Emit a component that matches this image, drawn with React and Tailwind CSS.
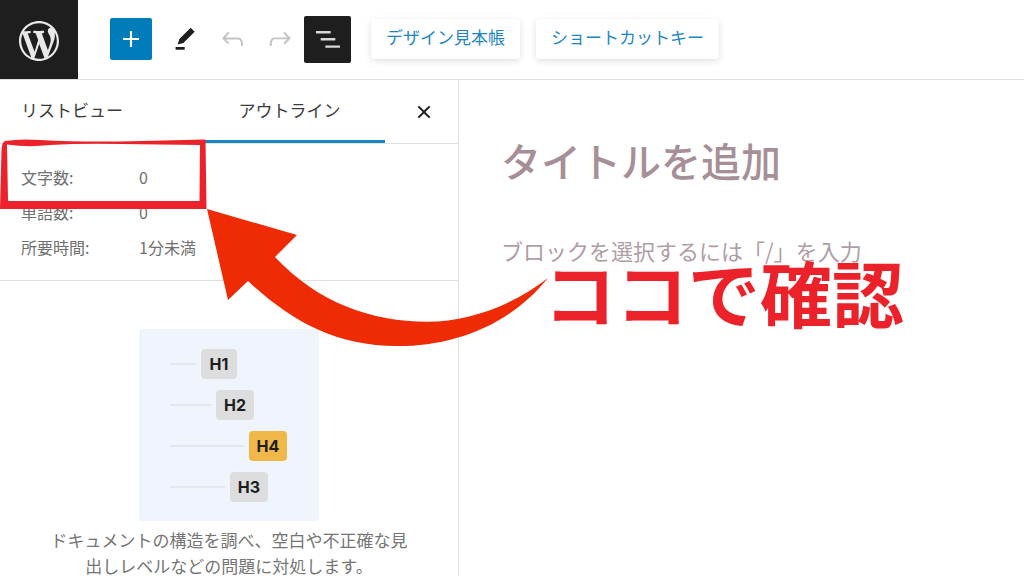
import { useState } from 'react';

const icons = {
  plus: 'M18 11.2h-5.2V6h-1.6v5.2H6v1.6h5.2V18h1.6v-5.2H18z',
  edit: 'm20 6.500-3-3-8.5 8.5-1.200 4.200 4.200-1.200L20 6.500Zm-7.500 11.500H5.700V20h6.800v-2Z',
  undo: 'M18.800 11.7c-.6-.6-1.4-.9-2.3-.9H7.200l2.9-3.3-1.1-1-4.5 5L9 16l1-1-2.7-2.7h9.200c.5 0 .9.2 1.3.5 1 1 1 3.100 1 4.200v.3h1.5v-.2c0-1.5 0-4-1.5-5.400z',
  redo: 'M15.6 6.5l-1.1 1 2.9 3.3H8c-.9 0-1.7.3-2.3.9-1.4 1.5-1.4 3.900-1.4 5.300v.2h1.5v-.3c0-1.1 0-3.200 1-4.200.3-.3.7-.5 1.3-.5h9.2L14.5 15l1.1 1.1 4.6-4.6-4.6-5z',
  list: 'M3 6h11v1.8H3V6Zm3.5 5.3h11v1.8h-11v-1.8ZM21 16.8H10v1.8h11v-1.8Z',
  close: 'M12 13.06l3.712 3.713 1.061-1.06L13.061 12l3.712-3.712-1.06-1.06L12 10.938 8.288 7.227l-1.061 1.06L10.939 12l-3.712 3.712 1.06 1.061L12 13.061z',
};

const stats = [
  { label: '文字数:', value: '0' },
  { label: '単語数:', value: '0' },
  { label: '所要時間:', value: '1分未満' },
];

const headings = [
  { label: 'H1', line: 'w-[26px]', badge: 'w-9 bg-[#dddddd]' },
  { label: 'H2', line: 'w-[41px]', badge: 'w-[38px] bg-[#dddddd]' },
  { label: 'H4', line: 'w-[74px]', badge: 'w-[38px] bg-[#f0b849]' },
  { label: 'H3', line: 'w-[55px]', badge: 'w-[38px] bg-[#dddddd]' },
];

function Icon({ name }) {
  return (
    <svg viewBox="0 0 24 24" className="w-8 h-8 shrink-0" fill="currentColor" aria-hidden="true">
      <path d={icons[name]} />
    </svg>
  );
}

function WordPressLogo() {
  return (
    <svg viewBox="0 0 20 20" className="w-10 h-10" fill="currentColor" aria-hidden="true">
      <path d="M20 10c0-5.51-4.49-10-10-10C4.48 0 0 4.49 0 10c0 5.52 4.48 10 10 10 5.51 0 10-4.48 10-10zM7.78 15.37L4.37 6.22c.55-.02 1.17-.08 1.17-.08.5-.06.44-1.13-.06-1.11 0 0-1.45.11-2.37.11-.18 0-.37 0-.58-.01C4.12 2.69 6.87 1.11 10 1.11c2.33 0 4.45.87 6.05 2.34-.68-.11-1.65.39-1.65 1.58 0 .74.45 1.36.9 2.1.35.61.55 1.36.55 2.46 0 1.49-1.4 5-1.4 5l-3.03-8.37c.54-.02.82-.17.82-.17.5-.05.44-1.25-.06-1.22 0 0-1.44.12-2.38.12-.87 0-2.33-.12-2.33-.12-.5-.03-.56 1.2-.06 1.22l.92.08 1.26 3.41zM17.41 10c.24-.64.74-1.87.43-4.25.7 1.29 1.05 2.71 1.05 4.25 0 3.29-1.73 6.24-4.4 7.78.97-2.59 1.94-5.2 2.92-7.78zM6.1 18.09C3.12 16.65 1.11 13.53 1.11 10c0-1.3.23-2.48.72-3.59C3.25 10.3 4.67 14.2 6.1 18.09zm4.03-6.63l2.58 6.98c-.86.29-1.76.45-2.71.45-.79 0-1.57-.11-2.29-.33.81-2.38 1.62-4.74 2.42-7.1z" />
    </svg>
  );
}

function Header() {
  const linkButton = 'h-10 px-[15px] pb-1 rounded-sm bg-white text-[17px] text-[#1c86c3] shadow-[0_2px_7px_rgba(0,0,0,0.13)]';
  return (
    <header className="flex items-center border-b border-[#e0e0e0]">
      <a href="#" aria-label="投稿一覧" className="w-[78px] h-[79px] pt-0.5 flex items-center justify-center bg-[#1e1e1e] text-[#e8e8e8]">
        <WordPressLogo />
      </a>
      <div className="flex items-center gap-4 pl-8 pb-px">
        <button aria-label="ブロックを追加" className="w-[42px] h-[42px] flex items-center justify-center rounded-xs bg-[#007cba] text-white"><Icon name="plus" /></button>
        <button aria-label="ツール" className="text-[#1e1e1e]"><Icon name="edit" /></button>
        <button aria-label="元に戻す" className="text-[#c4c4c4]"><Icon name="undo" /></button>
        <button aria-label="やり直す" className="text-[#c4c4c4]"><Icon name="redo" /></button>
        <button aria-label="ドキュメント概観" className="-ml-2 w-[47px] h-[47px] flex items-center justify-center rounded-xs bg-[#1e1e1e] text-[#d8d8d8]"><Icon name="list" /></button>
        <button className={`${linkButton} ml-1`}>デザイン見本帳</button>
        <button className={linkButton}>ショートカットキー</button>
      </div>
    </header>
  );
}

function Sidebar() {
  return (
    <aside className="w-[459px] shrink-0 border-r border-[#e0e0e0]">
      <div className="h-16 flex border-b border-[#e0e0e0] text-[17px] text-[#3c3c3c]">
        <div role="tablist" className="flex">
          <button role="tab" aria-selected="false" className="w-[194px] pl-[21px] pb-1 text-left">リストビュー</button>
          <button role="tab" aria-selected="true" className="w-[191px] border-b-3 border-[#1c86c3]">アウトライン</button>
        </div>
        <button aria-label="閉じる" className="ml-auto mr-[18px] text-[#1e1e1e]"><Icon name="close" /></button>
      </div>

      <dl className="px-[21px] pt-4 pb-[15px] border-b border-[#e0e0e0] text-base leading-[35px] text-[#707070]">
        {stats.map((s) => (
          <div key={s.label} className="flex">
            <dt className="w-[118px]">{s.label}</dt>
            <dd>{s.value}</dd>
          </div>
        ))}
      </dl>

      <div className="pt-12 flex flex-col items-center">
        <div className="w-[180px] h-48 pl-[31px] flex flex-col justify-center gap-[11px] rounded-xs bg-[#f0f5fd]">
          {headings.map((h) => (
            <div key={h.label} className="flex items-center gap-[5px]">
              <span className={`${h.line} h-0.5 bg-[#e4e6ec]`} />
              <span className={`${h.badge} h-[30px] flex items-center justify-center rounded-sm font-['Inter',sans-serif] font-bold text-base text-[#1e1e1e]`}>{h.label}</span>
            </div>
          ))}
        </div>
        <p className="w-[358px] pt-1.5 text-center text-[17px] leading-[26px] text-[#757575]">
          ドキュメントの構造を調べ、空白や不正確な見出しレベルなどの問題に対処します。
        </p>
      </div>
    </aside>
  );
}

function Editor() {
  const [title, setTitle] = useState('');
  const [body, setBody] = useState('');
  return (
    <main className="flex-1 min-w-0 pl-[42px] pt-14">
      <input
        type="text"
        aria-label="タイトルを追加"
        value={title}
        onChange={(e) => setTitle(e.target.value)}
        placeholder="タイトルを追加"
        className="block w-full h-12 text-[40px] font-medium outline-none placeholder-[#a78f98]"
      />
      <input
        type="text"
        aria-label="ブロック"
        value={body}
        onChange={(e) => setBody(e.target.value)}
        placeholder="ブロックを選択するには「/」を入力"
        className="block w-full h-8 mt-[50px] text-[22px] outline-none placeholder-[#b09da5]"
      />
    </main>
  );
}

// Hand-drawn frame, arrow and caption that lie over the editor
function Annotation() {
  return (
    <div className="absolute inset-0 pointer-events-none">
      <svg width="560" height="360" viewBox="0 0 560 360" aria-hidden="true">
        <path
          fill="#ec222a"
          fillRule="evenodd"
          d="M0 209 L1.500 150 Q2 142 5 141 Q20 138.500 40 140 Q75 142 120 141.500 L205.500 139.500 L206.500 209 Z M7 144.500 Q28 147.500 50 145 Q80 143.300 120 144 L200 145 L199.500 201 L8 201 Z"
        />
        <path
          fill="#ee2b05"
          d="M207 209 L297 235 L275 257 C318 303 372 321.700 427 321.700 C470 321.700 515 304 548 278 C510 325 455 346 397 346 C335 346 290 320 248 281 L228 300 Z"
        />
      </svg>
      <p className="absolute left-[544px] top-[255px] text-[72px] leading-[72px] font-bold whitespace-nowrap text-[#ec222a]">ココで確認</p>
    </div>
  );
}

export default function App() {
  return (
    <div className="relative min-h-screen flex flex-col bg-white font-['Noto_Sans_CJK_JP',sans-serif]">
      <Header />
      <div className="flex-1 flex">
        <Sidebar />
        <Editor />
      </div>
      <Annotation />
    </div>
  );
}
